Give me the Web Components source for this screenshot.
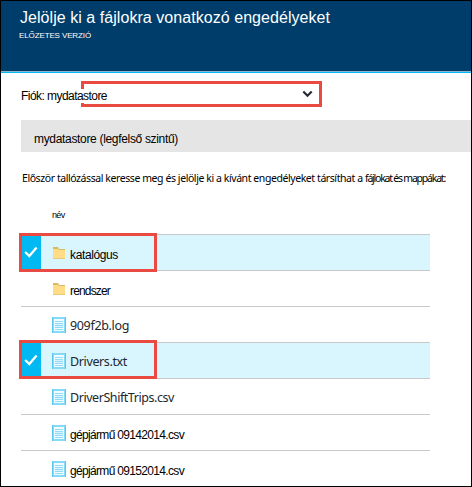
<!DOCTYPE html>
<html lang="hu">
<head>
<meta charset="utf-8">
<title>Jelölje ki a fájlokra vonatkozó engedélyeket</title>
<style>
body{margin:0;background:#fff;font-family:"Liberation Sans",Arial,sans-serif;color:#000}
</style>
</head>
<body>
<permission-blade></permission-blade>
<script>
// Text run whose letter spacing is set so that it fills a given width.
class FitText extends HTMLElement{
  connectedCallback(){
    const r=this.attachShadow({mode:'open'});
    r.innerHTML='<style>:host{display:inline-block;white-space:pre}span{display:inline-block}</style><span></span>';
    const s=r.querySelector('span');
    s.textContent=this.getAttribute('text');
    const w=+this.getAttribute('width');
    s.style.letterSpacing=((w-s.getBoundingClientRect().width)/s.textContent.length)+'px';
  }
}
class BladeHeader extends HTMLElement{
  connectedCallback(){
    this.attachShadow({mode:'open'}).innerHTML=`<style>
    :host{display:block;box-sizing:border-box;height:72px;background:#003d6b;color:#fff;padding:7px 0 0 19px;border-bottom:1px solid #00b9f2;box-shadow:inset 0 -1px #8fb4c9}
    .t{font-size:16px;line-height:20px;height:20px}
    .s{font-size:8px;line-height:12px;height:12px;margin-top:2px;margin-left:-1px}
    </style><div class="t"><fit-text text="Jelölje ki a fájlokra vonatkozó engedélyeket" width="310"></fit-text></div>
    <div class="s"><fit-text text="ELŐZETES VERZIÓ" width="72"></fit-text></div>`;
  }
}
class AccountPicker extends HTMLElement{
  connectedCallback(){
    this.attachShadow({mode:'open'}).innerHTML=`<style>
    :host{display:grid;grid-template-columns:60px 241px;margin:8px 0 0 20px;height:26px;font-size:12px;color:#000}
    .box{grid-area:1/2;border:3px solid #e94b43;display:flex;align-items:center;justify-content:flex-end;padding-right:6px;box-sizing:border-box}
    .label{grid-area:1/1/2/3;align-self:start;justify-self:start;margin-top:8px;height:14px;line-height:14px;background:#fff;z-index:1}
    svg{display:block}
    </style><div class="label"><fit-text text="Fiók: mydatastore" width="86"></fit-text></div>
    <div class="box"><svg width="11" height="8" viewBox="0 0 11 8"><path d="M1.3 1.5 5.5 5.7 9.7 1.5" fill="none" stroke="#262b33" stroke-width="2.2"/></svg></div>`;
  }
}
class PathBar extends HTMLElement{
  connectedCallback(){
    this.attachShadow({mode:'open'}).innerHTML=`<style>
    :host{display:flex;align-items:center;box-sizing:border-box;height:32px;margin:13px 0 0 20px;padding:5px 0 0 13px;background:#e5e5e5;font-size:12px}
    </style><fit-text text="mydatastore (legfelső szintű)" width="144"></fit-text>`;
  }
}
const icons={
folder:'<svg width="14" height="14" viewBox="0 0 14 14"><path d="M1 1h5l1 2h6v10H1z" fill="#d8b964"/><path d="M1 3h5l1 1h6v8.5H1z" fill="#ffdc85"/></svg>',
file:'<svg width="14" height="16" viewBox="0 0 14 16"><path d="M0 0h14v16H0z" fill="#86daf6"/><path d="M0 0h1v16H0zM13 0h1v16h-1z" fill="#55c9ef"/><path d="M2 2h10v12H2z" fill="#f2fbff"/><path d="M3 6h8v5H3z" fill="#d5f2fd"/><path d="M3 4.5h8M3 6.5h8M3 8.5h8M3 10.5h8M3 12.5h8" stroke="#92dcf6"/></svg>'};
class FileRow extends HTMLElement{
  connectedCallback(){
    const on=this.hasAttribute('selected'),k=this.getAttribute('kind');
    this.attachShadow({mode:'open'}).innerHTML=`<style>
    :host{display:flex;position:relative;box-sizing:border-box;height:36px;border-top:1px solid #c8c8c8;font-size:12px;color:#000}
    :host([selected]){background:#d9f5fe}
    :host([segoe]){font:12.5px "Noto Sans","Open Sans",sans-serif;color:#22272d}
    .c{width:20px;flex:none;display:flex;justify-content:center;align-items:center;padding-bottom:2px;box-sizing:border-box}
    :host([selected]) .c{background:#00b9f2}
    .i{width:29px;flex:none;padding:${k=='folder'?'11px':'10px'} 0 0 11px;box-sizing:border-box}
    svg{display:block}
    .n{line-height:16px;padding-top:${this.hasAttribute('segoe')?11:12}px}
    .mark{position:absolute;left:-2px;top:${this.getAttribute('top')}px;width:138px;height:39px;box-sizing:border-box;border:3px solid #e94b43}
    </style><div class="c">${on?'<svg width="14" height="12" viewBox="0 0 14 12"><path d="M1.2 6 5.3 10 12.6 1.5" fill="none" stroke="#fff" stroke-width="2.3"/></svg>':''}</div>
    <div class="i">${icons[k]}</div><div class="n"><fit-text text="${this.getAttribute('name')}" width="${this.getAttribute('w')}"></fit-text></div>${on?'<div class="mark"></div>':''}`;
  }
}
class FileTable extends HTMLElement{
  connectedCallback(){
    this.attachShadow({mode:'open'}).innerHTML=`<style>
    :host{display:block;width:409px;margin:22px 0 0 20px}
    .h{height:25px;padding:1px 0 0 31px;font-size:9px;line-height:12px}
    ::slotted(file-row[selected]){z-index:1}
    </style><div class="h"><fit-text text="név" width="12.5"></fit-text></div><slot></slot>`;
  }
}
class PermissionBlade extends HTMLElement{
  connectedCallback(){
    this.attachShadow({mode:'open'}).innerHTML=`<style>
    :host{display:block;box-sizing:border-box;width:472px;height:487px;border:1px solid #000;overflow:hidden}
    .p{display:flex;font:10.5px/16px "Noto Sans","Open Sans",sans-serif;margin:18px 0 0 21px;height:16px}
    </style>
    <blade-header></blade-header><account-picker></account-picker><path-bar></path-bar>
    <div class="p"><fit-text text="Először tallózással keresse meg és jelölje ki a kívánt engedélyeket társíthat a " width="343"></fit-text><fit-text text="fájlokat és mappákat:" width="80"></fit-text></div>
    <file-table>
    <file-row selected kind="folder" name="katalógus" w="48" top="-2"></file-row>
    <file-row kind="folder" name="rendszer" w="40"></file-row>
    <file-row segoe kind="file" name="909f2b.log" w="59"></file-row>
    <file-row segoe selected kind="file" name="Drivers.txt" w="57" top="-3"></file-row>
    <file-row segoe kind="file" name="DriverShiftTrips.csv" w="104"></file-row>
    <file-row kind="file" name="gépjármű 09142014.csv" w="114"></file-row>
    <file-row kind="file" name="gépjármű 09152014.csv" w="114"></file-row>
    </file-table>`;
  }
}
customElements.define('fit-text',FitText);
customElements.define('blade-header',BladeHeader);
customElements.define('account-picker',AccountPicker);
customElements.define('path-bar',PathBar);
customElements.define('file-row',FileRow);
customElements.define('file-table',FileTable);
customElements.define('permission-blade',PermissionBlade);
</script>
</body>
</html>
